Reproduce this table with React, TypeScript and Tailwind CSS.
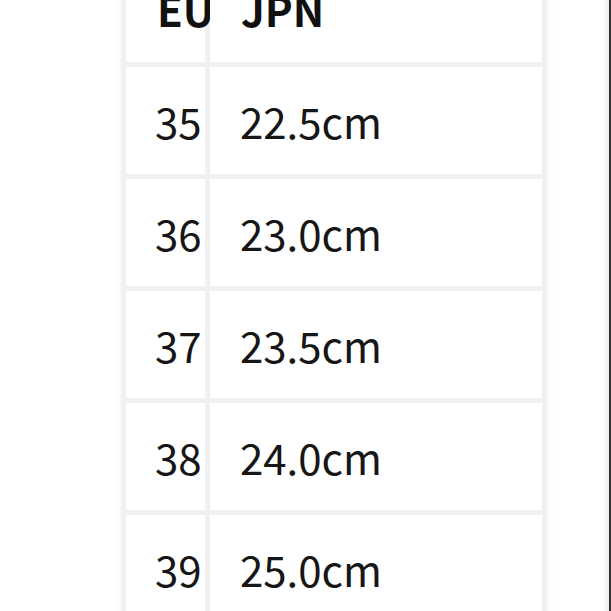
import React from "react";

const rows = [
  ["35", "22.5cm"],
  ["36", "23.0cm"],
  ["37", "23.5cm"],
  ["38", "24.0cm"],
  ["39", "25.0cm"],
];

export default function App() {
  return (
    <div
      className="w-[611px] h-[611px] overflow-hidden bg-white flex"
      style={{ fontFamily: '"Noto Sans CJK SC", "Noto Sans", sans-serif' }}
    >
      <div className="w-[121px] shrink-0" />
      <div className="mt-[-50px] shrink-0 w-[426px] self-start bg-[#f0f0f0] p-[5px] grid grid-cols-[79px_332px] gap-[5px] shadow-[0_0_8px_rgba(0,0,0,0.05)]">
        <div className="bg-white h-[107px] flex items-center pl-[31px] text-[42px] leading-none font-bold text-[#111]">
          EU
        </div>
        <div className="bg-white h-[107px] flex items-center pl-[31px] text-[42px] leading-none font-bold text-[#111]">
          JPN
        </div>
        {rows.map(([eu, jp]) => (
          <React.Fragment key={eu}>
            <div className="bg-white h-[107px] flex items-center pl-[29px] text-[42px] leading-none text-[#161616]">
              {eu}
            </div>
            <div className="bg-white h-[107px] flex items-center pl-[30px] text-[42px] leading-none text-[#161616]">
              {jp}
            </div>
          </React.Fragment>
        ))}
      </div>
      <div className="flex-1" />
      <div className="w-[6px] shrink-0 bg-gradient-to-r from-white to-[#ececec]" />
      <div className="w-[2px] shrink-0 bg-[#333]" />
    </div>
  );
}
